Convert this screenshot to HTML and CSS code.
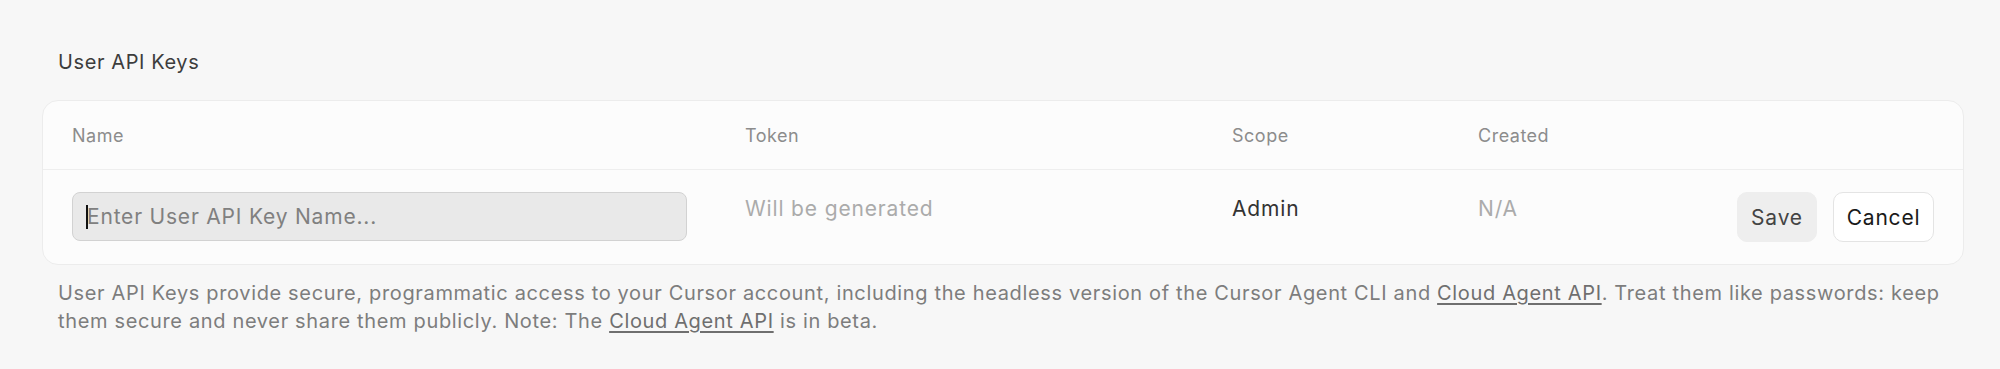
FILE: index.html
```html
<!DOCTYPE html>
<html lang="en">
<head>
<meta charset="utf-8">
<title>User API Keys</title>
<link rel="stylesheet" href="styles.css">
</head>
<body>
<section class="keys">
  <h2 class="keys-title">User API Keys</h2>
  <div class="card">
    <div class="row head">
      <div class="cell">Name</div>
      <div class="cell">Token</div>
      <div class="cell">Scope</div>
      <div class="cell">Created</div>
      <div class="cell"></div>
    </div>
    <div class="row body">
      <div class="cell">
        <div class="name-input"><span class="caret"></span><span class="placeholder">Enter User API Key Name...</span></div>
      </div>
      <div class="cell muted">Will be generated</div>
      <div class="cell strong">Admin</div>
      <div class="cell muted">N/A</div>
      <div class="cell actions">
        <button class="btn btn-save">Save</button>
        <button class="btn btn-cancel">Cancel</button>
      </div>
    </div>
  </div>
  <p class="note">User API Keys provide secure, programmatic access to your Cursor account, including the headless version of the Cursor Agent CLI and <a href="#">Cloud Agent API</a>. Treat them like passwords: keep them secure and never share them publicly. Note: The <a href="#">Cloud Agent API</a> is in beta.</p>
</section>
</body>
</html>
```

FILE: styles.css
```css
html, body {
  margin: 0;
  padding: 0;
  background: #f7f7f7;
}
body {
  font-family: Inter, "Liberation Sans", sans-serif;
  color: #2b2b2b;
}
.keys {
  padding: 49px 36px 0 42px;
}
.keys-title {
  margin: 0 0 25px 16px;
  font-size: 20px;
  line-height: 26px;
  font-weight: 400;
  letter-spacing: 0.6px;
  color: #3d3d3d;
}
.card {
  background: #fcfcfc;
  border: 1px solid #ececec;
  border-radius: 16px;
}
.row {
  display: grid;
  grid-template-columns: 673px 487px 246px 1fr auto;
}
.row.head {
  height: 68px;
  align-items: center;
  border-bottom: 1px solid #eeeeee;
  font-size: 18px;
  letter-spacing: 0.5px;
  color: #8c8c8c;
}
.row.head .cell {
  padding: 0 29px;
}
.row.body {
  height: 94px;
  align-items: start;
  font-size: 21px;
  line-height: 30px;
  letter-spacing: 0.85px;
}
.row.body .cell {
  padding: 24px 29px 0;
}
.row.body .cell:first-child,
.row.body .cell.actions {
  padding-top: 22px;
}
.muted {
  color: #ababab;
}
.strong {
  color: #333333;
}
.name-input {
  box-sizing: border-box;
  height: 49px;
  display: flex;
  align-items: center;
  padding: 0 13px;
  background: #e9e9e9;
  border: 1.5px solid #d2d2d2;
  border-radius: 8px;
  color: #808080;
  letter-spacing: 0.8px;
}
.caret {
  display: inline-block;
  width: 2px;
  height: 24px;
  background: #111;
  margin-right: -1px;
}
.actions {
  display: flex;
  gap: 16px;
}
.btn {
  box-sizing: border-box;
  height: 50px;
  padding: 0;
  font-family: inherit;
  font-size: 21px;
  letter-spacing: 0.8px;
  border-radius: 10px;
  cursor: pointer;
}
.btn-save {
  width: 80px;
  background: #eeeeee;
  border: 1px solid #eeeeee;
  color: #444444;
}
.btn-cancel {
  width: 101px;
  background: #ffffff;
  border: 1px solid #e4e4e4;
  color: #1a1a1a;
}
.note {
  margin: 14px 0 0 16px;
  font-size: 20px;
  line-height: 28px;
  letter-spacing: 0.65px;
  color: #7d7d7d;
}
.note a {
  color: #6f6f6f;
  text-decoration: underline;
  text-underline-offset: 3px;
}
```
